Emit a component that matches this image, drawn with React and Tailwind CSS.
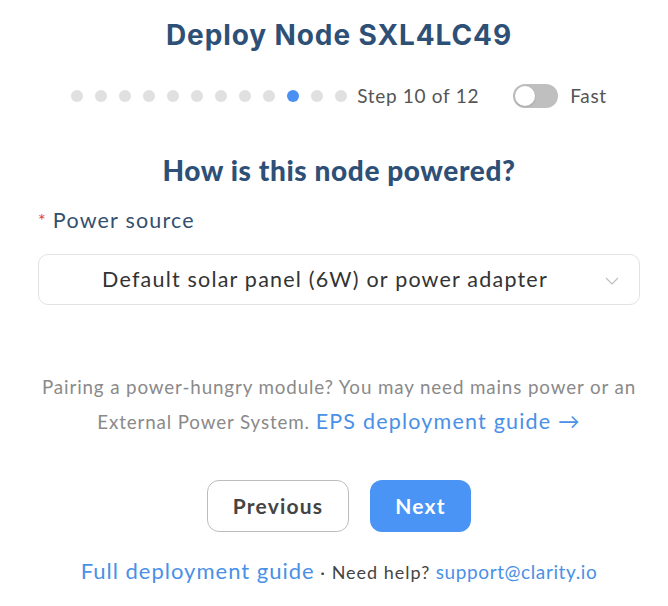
import { useState } from 'react';

const body = { fontFamily: 'Lato, "Noto Sans", sans-serif' };

function Dots({ total, current }) {
  return (
    <div className="flex items-center gap-3">
      {Array.from({ length: total }).map((_, i) => (
        <span
          key={i}
          className={i + 1 === current ? 'w-3 h-3 rounded-full bg-[#4a90f2]' : 'w-3 h-3 rounded-full bg-[#e0e0e0]'}
        />
      ))}
    </div>
  );
}

export default function App() {
  const [fast, setFast] = useState(false);

  return (
    <div className="w-[668px] h-[606px] bg-white overflow-hidden" style={body}>
      <div className="ml-[38px] w-[602px] flex flex-col items-center">
        <h1
          className="pt-[15px] text-[28px] leading-[40px] font-bold text-[#2e5076] tracking-[0.9px]"
          style={{ fontFamily: 'Inter, "Noto Sans", sans-serif' }}
        >
          Deploy Node SXL4LC49
        </h1>

        <div className="mt-[29px] h-6 flex items-center">
          <Dots total={12} current={10} />
          <span className="ml-[10px] text-[19px] tracking-[0.7px] text-[#555]">Step 10 of 12</span>
          <button
            onClick={() => setFast(!fast)}
            className={`ml-[34px] w-[45px] h-[24px] rounded-full relative ${fast ? 'bg-[#4a90f2]' : 'bg-[#bfbfbf]'}`}
            aria-label="Fast"
          >
            <span
              className={`absolute top-[2px] w-5 h-5 rounded-full bg-white shadow ${fast ? 'left-[23px]' : 'left-[2px]'}`}
            />
          </button>
          <span className="ml-3 text-[19px] tracking-[0.7px] text-[#555]">Fast</span>
        </div>

        <h2 className="mt-[44px] text-[28px] leading-[36px] font-black tracking-[0.6px] text-[#2e5076]">
          How is this node powered?
        </h2>

        <label className="mt-[18px] self-start text-[21.5px] leading-[28px] tracking-[1.2px] text-[#34506f]">
          <span className="text-[#e53935] text-[18px] align-top mr-1.5">*</span>Power source
        </label>

        <div className="mt-[20px] w-full h-[51px] rounded-[10px] border border-[#e2e2e2] flex items-center pr-[28px] relative">
          <span className="flex-1 text-center text-[21.5px] tracking-[1.2px] text-[#333]">
            Default solar panel (6W) or power adapter
          </span>
          <svg className="absolute right-[19px] top-[18px]" width="16" height="16" viewBox="0 0 16 16" fill="none">
            <path d="M2 5l6 6 6-6" stroke="#bdbdbd" strokeWidth="1.2" />
          </svg>
        </div>

        <p className="mt-[64px] text-center text-[18.8px] leading-[35px] tracking-[0.87px] text-[#8a8a8a] whitespace-nowrap">
          Pairing a power-hungry module? You may need mains power or an
          <br />
          External Power System.{' '}
          <a href="#" className="text-[21.5px] tracking-[1.2px] text-[#4a90e6]">EPS deployment guide →</a>
        </p>

        <div className="mt-[41px] flex gap-[21px]">
          <button className="w-[142px] h-[52px] rounded-[12px] border border-[#bdbdbd] bg-white text-[21px] tracking-[1.2px] font-bold text-[#444]">
            Previous
          </button>
          <button className="w-[101px] h-[52px] rounded-[12px] bg-[#4a94f6] text-[21px] tracking-[1.2px] font-bold text-white">
            Next
          </button>
        </div>

        <div className="mt-[25px] leading-[28px] text-center whitespace-nowrap">
          <a href="#" className="text-[22px] tracking-[1px] text-[#4a90e6]">Full deployment guide</a>
          <span className="text-[18px] tracking-[1px] text-[#444]"> · Need help? </span>
          <a href="#" className="text-[19px] tracking-[0.6px] text-[#4a90e6]">support@clarity.io</a>
        </div>
      </div>
    </div>
  );
}
